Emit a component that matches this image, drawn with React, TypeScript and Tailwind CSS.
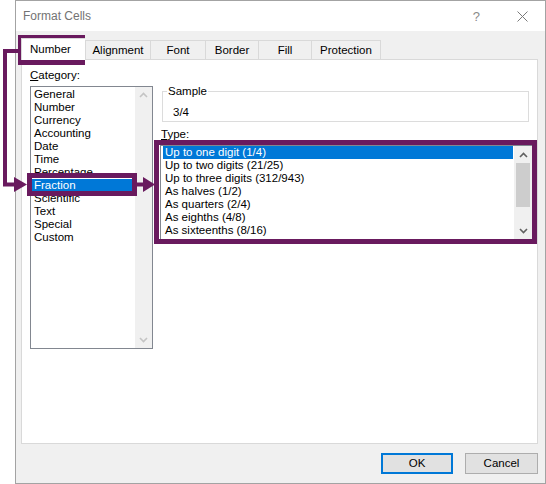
import React from "react";

const PURPLE = "#691a5e";

const categories = [
  "General",
  "Number",
  "Currency",
  "Accounting",
  "Date",
  "Time",
  "Percentage",
  "Fraction",
  "Scientific",
  "Text",
  "Special",
  "Custom",
];

const fractionTypes = [
  "Up to one digit (1/4)",
  "Up to two digits (21/25)",
  "Up to three digits (312/943)",
  "As halves (1/2)",
  "As quarters (2/4)",
  "As eighths (4/8)",
  "As sixteenths (8/16)",
];

const tabs = [
  { label: "Number", w: "w-[64px]" },
  { label: "Alignment", w: "w-[65px]" },
  { label: "Font", w: "w-[55px]" },
  { label: "Border", w: "w-[53px]" },
  { label: "Fill", w: "w-[53px]" },
  { label: "Protection", w: "w-[70px]" },
];

function Chevron({ up, color }: { up?: boolean; color: string }) {
  return (
    <svg width="9" height="6" viewBox="0 0 9 6">
      <polyline
        points={up ? "1,5 4.5,1.5 8,5" : "1,1 4.5,4.5 8,1"}
        fill="none"
        stroke={color}
        strokeWidth="1.6"
      />
    </svg>
  );
}

function Annotations() {
  return (
    <svg className="absolute left-0 top-0 pointer-events-none" width="546" height="484" viewBox="0 0 546 484">
      {/* boxes */}
      <rect x="20.5" y="37.5" width="62" height="25" fill="none" stroke={PURPLE} strokeWidth="5" />
      <rect x="29.5" y="175.5" width="105" height="18" fill="none" stroke={PURPLE} strokeWidth="5" />
      <rect x="156.5" y="142.5" width="378" height="99" fill="none" stroke={PURPLE} strokeWidth="5" />
      {/* tab -> fraction */}
      <path d="M18 51 H5 V184.5 H16" fill="none" stroke={PURPLE} strokeWidth="4" />
      <polygon points="14,177 27,184.5 14,192" fill={PURPLE} />
      {/* fraction -> type list */}
      <path d="M137 184.5 H145" fill="none" stroke={PURPLE} strokeWidth="4" />
      <polygon points="143,177 155,184.5 143,192" fill={PURPLE} />
    </svg>
  );
}

export default function App() {
  return (
    <div className="relative w-[546px] h-[484px] bg-white overflow-hidden font-['Liberation_Sans',Arial,sans-serif] text-[11.5px] leading-[13px] text-black">
      <div className="ml-[15px] w-[531px] h-[484px] border border-[#a3a3a3] bg-[#f0f0f0] flex flex-col">
        {/* title bar */}
        <div className="h-[30px] bg-white flex items-center pl-[7px] pt-[1px] text-[12px] text-[#737373]">
          <span>Format Cells</span>
          <span className="ml-auto text-[13px] text-[#8a8a8a]">?</span>
          <span className="ml-[37px] mr-[17px]">
            <svg width="11" height="11" viewBox="0 0 11 11">
              <path d="M0.5 0.5 L10.5 10.5 M10.5 0.5 L0.5 10.5" stroke="#7a7a7a" strokeWidth="1" />
            </svg>
          </span>
        </div>

        {/* tabs */}
        <div className="mt-[7px] ml-[5px] h-[22px] flex items-end relative z-10 -mb-px">
          {tabs.map((t, i) =>
            i === 0 ? (
              <div
                key={t.label}
                className={`${t.w} h-[22px] bg-white border-l border-t border-[#d9d9d9] flex items-center pl-[8px]`}
              >
                {t.label}
              </div>
            ) : (
              <div
                key={t.label}
                className={`${t.w} h-[19px] mb-px bg-[#f0f0f0] border-l border-t border-[#d9d9d9] flex items-center justify-center ${
                  i === tabs.length - 1 ? "border-r" : ""
                }`}
              >
                {t.label}
              </div>
            )
          )}
        </div>

        {/* panel */}
        <div className="ml-[5px] w-[517px] h-[385px] bg-white border border-[#d9d9d9] flex pl-[8px] pt-[9px]">
          <div className="w-[123px] flex flex-col">
            <div className="h-[13px] mb-[4px]">
              <span className="underline">C</span>ategory:
            </div>
            <div className="h-[263px] border border-[#828790] flex">
              <div className="flex-1 pt-[1px] pl-[1px] pr-[2px]">
                {categories.map((c) => (
                  <div
                    key={c}
                    className={`h-[13px] pl-[2px] whitespace-nowrap ${c === "Fraction" ? "bg-[#0078d7] text-white" : ""}`}
                  >
                    {c}
                  </div>
                ))}
              </div>
              <div className="w-[17px] bg-[#f0f0f0] flex flex-col justify-between items-center py-[5px]">
                <Chevron up color="#c4c4c4" />
                <Chevron color="#c4c4c4" />
              </div>
            </div>
          </div>

          <div className="ml-[7px] w-[373px] flex flex-col">
            <fieldset className="mt-[16px] ml-[2px] w-[367px] border border-[#dcdcdc] pt-[8px] pb-[2px]">
              <legend className="ml-[4px] px-[1px] h-[13px]">Sample</legend>
              <div className="h-[13px] pl-[10px]">3/4</div>
            </fieldset>
            <div className="mt-[6px] ml-[1px] h-[13px] mb-[4px]">
              <span className="underline">T</span>ype:
            </div>
            <div className="h-[95px] border border-[#828790] flex">
              <div className="flex-1 pl-[2px] pr-[1px]">
                {fractionTypes.map((t, i) => (
                  <div
                    key={t}
                    className={`h-[13px] pl-[2px] whitespace-nowrap ${i === 0 ? "bg-[#0078d7] text-white" : ""}`}
                  >
                    {t}
                  </div>
                ))}
              </div>
              <div className="w-[18px] bg-[#f0f0f0] flex flex-col">
                <div className="h-[17px] flex items-center justify-center">
                  <Chevron up color="#606060" />
                </div>
                <div className="flex-1">
                  <div className="h-[44px] mx-[2px] bg-[#cdcdcd]" />
                </div>
                <div className="h-[17px] flex items-center justify-center">
                  <Chevron color="#606060" />
                </div>
              </div>
            </div>
          </div>
        </div>

        {/* buttons */}
        <div className="mt-[9px] mr-[7px] flex justify-end gap-[12px]">
          <button className="w-[72px] h-[21px] border-2 border-[#0078d7] bg-[#e1e1e1] flex items-center justify-center">
            OK
          </button>
          <button className="w-[73px] h-[21px] border border-[#adadad] bg-[#e1e1e1] flex items-center justify-center">
            Cancel
          </button>
        </div>
      </div>
      <Annotations />
    </div>
  );
}
